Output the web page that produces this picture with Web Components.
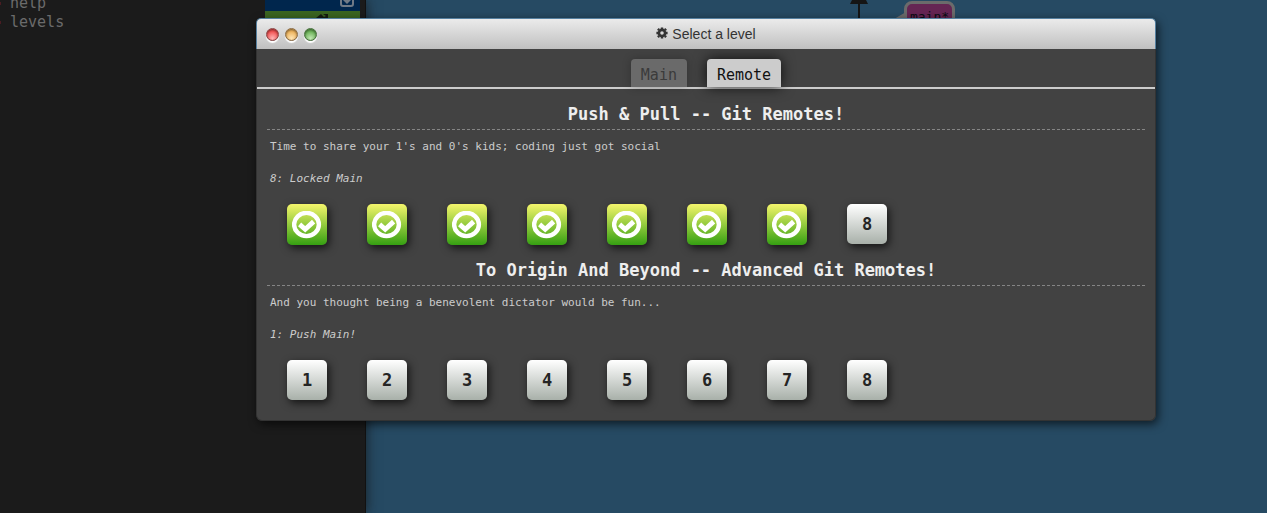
<!DOCTYPE html>
<html lang="en">
<head>
<meta charset="utf-8">
<title>Select a level</title>
<style>
html, body { height: 100%; margin: 0; }
body { background: #264a63; font-family: "DejaVu Sans Mono", monospace; overflow: hidden; }
level-app { height: 100%; }
</style>
</head>
<body>
<level-app></level-app>
<script>
const define = (name, html, setup) => customElements.define(name, class extends HTMLElement {
  connectedCallback() {
    if (this.shadowRoot) return;
    const root = this.attachShadow({ mode: "open" });
    const t = document.createElement("template");
    t.innerHTML = html;
    root.append(t.content.cloneNode(true));
    if (setup) setup(this, root);
  }
});

define("git-terminal", `
<style>
:host { display: flex; justify-content: space-between; box-sizing: border-box; background: #1b1b1b; border-right: 1px solid #111; padding-right: 5px; box-shadow: 0 0 12px rgba(20,20,20,.8); }
ul { list-style: none; margin: -6px 0 0; padding: 0; font-size: 15px; line-height: 19px; color: #6b6b6b; }
li { display: flex; align-items: center; gap: 9px; }
li::before { content: ""; width: 1px; height: 3px; background: #4a1c22; }
.tools { width: 95px; height: 40px; background: #3b6520; }
.bar { height: 11px; box-sizing: border-box; background: #00264d; display: flex; justify-content: flex-end; padding-right: 6px; }
.up { display: block; margin: 2px 0 0 51px; }
</style>
<ul><li>help</li><li>levels</li></ul>
<div class="tools">
  <div class="bar"><svg width="14" height="8" viewBox="0 0 14 8"><path d="M1 0V4Q1 6 3 6H11Q13 6 13 4V0" fill="none" stroke="#707a86" stroke-width="2"/><path d="M3 0H11L7 4Z" fill="#707a86"/></svg></div>
  <svg class="up" width="14" height="8" viewBox="0 0 14 8"><path d="M0 5L5 1L8 4L10 3L7 1H12V8H2Z" fill="#151a10"/></svg>
</div>`);

define("git-graph", `
<style>
:host { display: block; position: relative; background: #264a63; }
svg { position: absolute; left: 482px; top: 0; }
.branch { position: absolute; left: 538px; top: 1px; box-sizing: border-box; width: 51px; height: 30px; border: 3px solid #6b6b6b; border-radius: 8px; background: #652553; color: #0c0c14; font-size: 13px; line-height: 26px; text-align: center; }
</style>
<svg width="60" height="40" viewBox="0 0 60 40"><path d="M11 0V40" stroke="#151515" stroke-width="2"/><path d="M4 0H18L20 4H2Z" fill="#151515"/><path d="M46 19L58 12V24Z" fill="#6b6b6b"/></svg>
<div class="branch">main*</div>`);

define("title-bar", `
<style>
:host { display: flex; align-items: center; position: relative; height: 30px; border: 1px solid #5580a0; border-bottom: 0; border-radius: 5px 5px 0 0; background: linear-gradient(#ebebeb, #c0c0c0); color: #333; font: 14px/30px "Liberation Sans", Arial, sans-serif; }
.lights { display: flex; gap: 6px; padding-left: 9px; position: absolute; }
button { width: 13px; height: 13px; padding: 0; border: 1px solid #666; border-radius: 50%; box-shadow: 0 2px 1px #fff, inset 0 1px 2px rgba(0,0,0,.5); }
.close { background: radial-gradient(circle at 50% 85%, #ffb5b5, #f25252 65%); border-color: #8c4545; }
.min { background: radial-gradient(circle at 50% 85%, #ffe6b5, #eeb35b 65%); border-color: #8b6b43; }
.max { background: radial-gradient(circle at 50% 85%, #c1e8b2, #6bb257 65%); border-color: #47713c; }
.title { display: flex; align-items: center; justify-content: center; gap: 4px; flex: 1; }
.title svg { margin-bottom: 2px; }
</style>
<div class="lights"><button class="close" aria-label="Close"></button><button class="min" aria-label="Minimize"></button><button class="max" aria-label="Maximize"></button></div>
<div class="title"><svg width="12" height="12" viewBox="0 0 12 12" fill="none" stroke="#333"><circle cx="6" cy="6" r="3.1" stroke-width="2.6"/><path d="M6 0.4V2M6 10V11.6M0.4 6H2M10 6H11.6M1.9 1.9L3.2 3.2M8.8 8.8L10.1 10.1M1.9 10.1L3.2 8.8M8.8 3.2L10.1 1.9" stroke-width="2.4"/></svg><slot></slot></div>`);

define("level-tabs", `
<style>
:host { display: flex; justify-content: center; gap: 20px; padding-top: 10px; border-bottom: 2px solid #ccc; }
button { border: 0; border-radius: 4px 4px 0 0; height: 28px; padding: 4px 10px 0; font: 15px/24px "DejaVu Sans Mono", monospace; background: #6a6a6a; color: #3b3b3b; box-shadow: 0 0 8px rgba(0,0,0,.25); }
button[aria-selected="true"] { background: #ccc; color: #111; box-shadow: 0 0 14px rgba(0,0,0,.8); }
nav { display: contents; }
</style>
<nav role="tablist"><button role="tab" aria-selected="false">Main</button><button role="tab" aria-selected="true">Remote</button></nav>`);

define("level-button", `
<style>
:host { display: block; }
button { display: grid; place-items: center; width: 40px; height: 40px; padding: 0; border: 0; border-radius: 5px; background: linear-gradient(#fff, #a8b0a9); color: #252525; font: bold 17px/20px "DejaVu Sans Mono", monospace; box-shadow: 2px 3px 8px rgba(0,0,0,.7); }
:host([solved]) button { height: 41px; background: linear-gradient(#f4f56b, #35a012); }
</style>
<button></button>`, (host, root) => {
  const b = root.querySelector("button");
  if (host.hasAttribute("solved")) {
    b.setAttribute("aria-label", "Level " + host.getAttribute("number") + ", solved");
    b.innerHTML = '<svg width="30" height="28" viewBox="0 0 30 28" fill="none" stroke="#fff"><ellipse cx="14.5" cy="13.5" rx="12.4" ry="11.6" stroke-width="4.4"/><path d="M7.6 13.4L13.2 18.2L21.6 10.6" stroke-width="4.8"/></svg>';
  } else b.textContent = host.getAttribute("number");
});

define("level-sequence", `
<style>
:host { display: block; padding: 0 10px; }
h3 { margin: 0; height: 30px; box-sizing: border-box; border-bottom: 1px dashed #858585; font-size: 17px; line-height: 28px; text-align: center; color: #eee; }
p { margin: 0; padding: 0 3px; font-size: 11px; line-height: 32px; color: #ccc; }
.about { padding-top: 1px; }
.name { font-style: italic; }
.row { display: flex; gap: 40px; height: 61px; box-sizing: border-box; padding: 9px 20px 0; }
</style>
<h3></h3><p class="about"></p><p class="name"></p><div class="row"><slot></slot></div>`, (host, root) => {
  root.querySelector("h3").textContent = host.getAttribute("heading");
  root.querySelector(".about").textContent = host.getAttribute("about");
  root.querySelector(".name").textContent = host.getAttribute("current");
  for (let i = 1; i <= 8; i++) {
    const level = document.createElement("level-button");
    level.setAttribute("number", i);
    if (i <= Number(host.getAttribute("solved"))) level.setAttribute("solved", "");
    host.append(level);
  }
});

define("level-window", `
<style>
:host { display: block; border-radius: 6px; box-shadow: 2px 3px 10px rgba(0,0,0,.65); }
.body { background: #424242; border: 1px solid #333; border-top: 0; border-radius: 0 0 6px 6px; padding-bottom: 8px; }
.sequences { padding-top: 11px; }
</style>
<title-bar>Select a level</title-bar>
<div class="body"><level-tabs></level-tabs><div class="sequences"><slot></slot></div></div>`);

define("level-app", `
<style>
:host { display: grid; grid-template-columns: 366px 1fr; position: relative; }
git-terminal { z-index: 1; }
.overlay { position: absolute; inset: 0; z-index: 2; padding: 18px 111px 0 256px; }
</style>
<git-terminal></git-terminal><git-graph></git-graph>
<div class="overlay"><level-window>
  <level-sequence heading="Push &amp; Pull -- Git Remotes!" about="Time to share your 1's and 0's kids; coding just got social" current="8: Locked Main" solved="7"></level-sequence>
  <level-sequence heading="To Origin And Beyond -- Advanced Git Remotes!" about="And you thought being a benevolent dictator would be fun..." current="1: Push Main!" solved="0"></level-sequence>
</level-window></div>`);
</script>
</body>
</html>
